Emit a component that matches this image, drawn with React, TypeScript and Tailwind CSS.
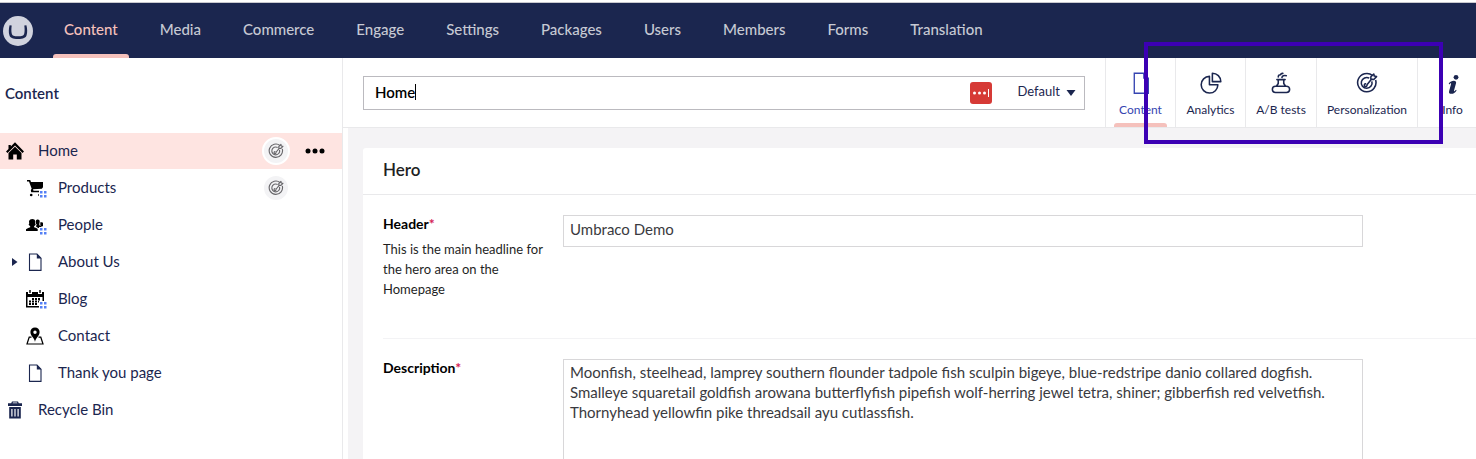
import { useState, type ReactNode } from "react";

const sections = ["Content", "Media", "Commerce", "Engage", "Settings", "Packages", "Users", "Members", "Forms", "Translation"];

function Logo() {
  return (
    <svg viewBox="0 0 30 30" className="size-[30px]" aria-hidden="true">
      <circle cx="15" cy="15" r="15" fill="#d1d3de" />
      <path d="M6.600 9.200c-.9 3.300-1.100 7.400-.2 10 .9 2.700 3.100 3.700 8.600 3.700s7.700-1 8.600-3.700c.9-2.600.7-6.700-.2-10l-2.100.3c.4 2.700.5 6.200-.1 8.200-.6 2-2.200 2.500-6.200 2.500s-5.600-.5-6.200-2.500c-.6-2-.5-5.500-.1-8.200z" fill="#1b264f" />
    </svg>
  );
}

function HomeIcon() {
  return (
    <svg viewBox="0 0 18 18" className="size-[18px]" fill="#000" aria-hidden="true">
      <path d="M9 .3l9 9.200-1.500 1.500L9 3.600l-7.500 7.400L0 9.500l2.500-2.600V3h2.300v1.600z" />
      <path d="M9 4.700l6.500 6.400V17.500h-4.700v-5H7.200v5H2.500v-6.400z" />
    </svg>
  );
}

function CartIcon() {
  return (
    <svg viewBox="0 0 18 18" className="size-[18px]" fill="#000" aria-hidden="true">
      <path d="M1 1h3.200l.8 2h12v5.200l-1.200 1.500-8.800.6.500 1.500h7V13.200H5.200L4.800 11l.9-1.200L3 2.600H1z" />
      <circle cx="5.200" cy="16" r="1.300" />
      <circle cx="13.500" cy="16" r="1.300" />
    </svg>
  );
}

function PeopleIcon() {
  return (
    <svg viewBox="0 0 18 18" className="size-[18px]" fill="#000" aria-hidden="true">
      <path d="M0 15v-1.800l2.200-1.200 2-.8v-1L2.600 8.800l.6-1.300-.2-2.200C3.500 3.700 4.800 3 6.300 3s2.900.8 3.100 2.500l-.2 2 .5 1.300-1.600 1.400v1l2.200.8 1.400 1.100V15z" />
      <path d="M10 4.600c.4-.8 1-1.100 1.800-1.100 1.200 0 1.900.8 1.900 2.200l-.4 2v1.500l2.200 1V12h-3.300l-2-1.200V9.500l.7-.8-.9-1z" />
      <path d="M14.300 6.200h1.500l1.200.6v3.400h-1.600l-1.100-.8z" />
    </svg>
  );
}

function CalendarIcon() {
  return (
    <svg viewBox="0 0 18 18" className="size-[18px]" fill="#000" aria-hidden="true">
      <path fillRule="evenodd" d="M0 2h2v2h4V2h6v2h4V2h2v15.500H0zM1.500 7v9h15V7z" />
      <path d="M3.300 0h1.400v3H3.300zM13.300 0h1.400v3h-1.400z" />
      <path d="M6 8h2v2H6zM9 8h2v2H9zM12 8h2v2h-2zM3 10.500h2v2H3zM6 10.500h2v2H6zM9 10.500h2v2H9zM12 10.500h2v2h-2zM3 13h2v2H3zM6 13h2v2H6zM9 13h2v2H9z" />
    </svg>
  );
}

function MapIcon() {
  return (
    <svg viewBox="0 0 18 18" className="size-[18px]" fill="#000" aria-hidden="true">
      <path fillRule="evenodd" d="M9 .5c2.700 0 4.600 1.900 4.600 4.500 0 2.400-1.500 4.200-2.700 5.800C9.900 12.200 9.300 13.300 9 15c-.3-1.700-.9-2.800-1.900-4.200C5.900 9.200 4.400 7.400 4.400 5 4.400 2.400 6.300.5 9 .5zm0 3a1.700 1.700 0 100 3.400 1.700 1.700 0 000-3.400z" />
      <path d="M5.500 10.200H3.200L1 17h16l-2.200-6.800h-2.300" fill="none" stroke="#000" strokeWidth="1.200" />
    </svg>
  );
}

function PageIcon({ color = "#1b264f", className = "size-[18px]" }: { color?: string; className?: string }) {
  return (
    <svg viewBox="0 0 18 18" className={className} aria-hidden="true">
      <path d="M3.500 1h7.500l4 4.200v12.200H3.500z" fill="none" stroke={color} strokeWidth="1.100" />
      <path d="M10.800.8l4.600 4.800h-4.600z" fill={color} />
    </svg>
  );
}

function TrashIcon() {
  return (
    <svg viewBox="0 0 18 18" className="size-[18px]" fill="#1b264f" aria-hidden="true">
      <path d="M6 .5h6l.8 1.800H16V5H2V2.300h3.200zM7 1.500l-.4.8h4.800l-.4-.8z" fillRule="evenodd" />
      <path fillRule="evenodd" d="M3.200 6h11.600v11.500H3.200zM5.300 8v7.500h1.200V8zm3.100 0v7.500h1.200V8zm3.100 0v7.500h1.200V8z" />
    </svg>
  );
}

function TargetIcon({ className }: { className: string }) {
  return (
    <svg viewBox="0 0 24 24" className={className} fill="none" stroke="currentColor" strokeWidth="1.700" strokeLinejoin="round" aria-hidden="true">
      <path d="M18.200 3.900A10 10 0 1 0 21.400 8.800" />
      <path d="M14.500 6.700A5.900 5.900 0 1 0 17.300 10.200" />
      <path d="M11 12.900a1.500 1.500 0 1 0 1 1L16.800 8M16.200 7.800V5.200l3.200-3 .5 2.200 2.500.6-3 3.100z" />
    </svg>
  );
}

function PieIcon() {
  return (
    <svg viewBox="0 0 24 24" className="size-[22px]" fill="none" stroke="#1b264f" strokeWidth="1.700" strokeLinejoin="round" aria-hidden="true">
      <path d="M10.300 4.800a9.100 9.100 0 1 0 9.200 9.200h-9.200z" />
      <path d="M13.500 1.300v9.200h9.200a9.200 9.200 0 0 0-9.200-9.200z" />
    </svg>
  );
}

function FlaskIcon() {
  return (
    <svg viewBox="0 0 24 24" className="size-[22px]" fill="none" stroke="#1b264f" strokeWidth="1.700" strokeLinecap="round" strokeLinejoin="round" aria-hidden="true">
      <path d="M7.500 8.300h9M9 8.500v4L7 15.500M15 8.500v4l2 3M6 15.500h12a3.400 3.400 0 0 1 0 6.800h-12a3.400 3.400 0 0 1 0-6.800z" />
      <path d="M9 5.500c0-2 1.200-2.700 2.500-2.500.3-1.200 1.300-1.600 2.500-1.500M13 6c.3-1.700 2-2.500 4.800-2" />
    </svg>
  );
}

function InfoIcon() {
  return (
    <svg viewBox="0 0 24 24" className="size-[22px]" fill="#1b264f" aria-hidden="true">
      <circle cx="15.300" cy="5.800" r="2.600" />
      <path d="M7.300 12.500c1.600-2 3.500-3 5.600-3 1.900 0 2.900 1 2.400 2.900l-2.200 7.800c-.2.800.3.900.8.500l1.400-1.300.6.700c-1.600 2.400-3.300 3.700-5.600 3.700-2.200 0-3.100-1.200-2.500-3.200l2.100-7.400c.3-1-.3-1.200-1-.6L8 13.500z" />
    </svg>
  );
}

type Node = { name: string; icon: ReactNode; root?: boolean; collection?: boolean; expandable?: boolean; targeted?: boolean; active?: boolean };

const nodes: Node[] = [
  { name: "Home", icon: <HomeIcon />, root: true, targeted: true, active: true },
  { name: "Products", icon: <CartIcon />, collection: true, targeted: true },
  { name: "People", icon: <PeopleIcon />, collection: true },
  { name: "About Us", icon: <PageIcon />, expandable: true },
  { name: "Blog", icon: <CalendarIcon />, collection: true },
  { name: "Contact", icon: <MapIcon /> },
  { name: "Thank you page", icon: <PageIcon /> },
  { name: "Recycle Bin", icon: <TrashIcon />, root: true },
];

function CollectionBadge() {
  return (
    <svg viewBox="0 0 8 8" className="absolute -right-[3px] -bottom-px size-2" aria-hidden="true">
      <path d="M0 0h8v8H0z" fill="#fff" />
      <path d="M1 1h2.500v2.500H1zM5 1h2.500v2.500H5zM1 5h2.500v2.500H1zM5 5h2.500v2.500H5z" fill="#5580f5" />
    </svg>
  );
}

function TreeRow({ node }: { node: Node }) {
  return (
    <li className={`flex h-9 items-center pr-[17px] ${node.active ? "bg-[#fee4e1]" : ""} ${node.root ? "pl-[6px]" : "pl-[10px]"}`}>
      {!node.root && (
        <span className="flex w-4 shrink-0 items-center">
          {node.expandable && (
            <button aria-label={`Expand ${node.name}`} className="flex h-5 w-3 items-center">
              <svg viewBox="0 0 8 8" className="ml-[2px] size-2" aria-hidden="true">
                <path d="M0 0l5.500 4L0 8z" fill="#1b264f" />
              </svg>
            </button>
          )}
        </span>
      )}
      <span className="relative shrink-0">
        {node.icon}
        {node.collection && <CollectionBadge />}
      </span>
      <a href="#" className="ml-[14px] flex-1 pb-[2px] leading-5">{node.name}</a>
      {node.targeted && (
        <span className={`flex size-7 items-center justify-center rounded-full border-2 border-white bg-[#f3f3f5] text-[#68676b] ${node.active ? "mr-[15px]" : "mr-[35px]"}`}>
          <TargetIcon className="size-4" />
        </span>
      )}
      {node.active && (
        <button aria-label="Actions" className="flex h-6 w-5 items-center">
          <svg viewBox="0 0 20 6" className="h-[6px] w-5" aria-hidden="true">
            <circle cx="3" cy="3" r="2.500" />
            <circle cx="10" cy="3" r="2.500" />
            <circle cx="17" cy="3" r="2.500" />
          </svg>
        </button>
      )}
    </li>
  );
}

const apps = [
  { name: "Content", icon: <PageIcon color="#3544b1" className="size-[22px]" />, width: "w-[70px]", active: true },
  { name: "Analytics", icon: <PieIcon />, width: "w-[70px]" },
  { name: "A/B tests", icon: <FlaskIcon />, width: "w-[71px]" },
  { name: "Personalization", icon: <TargetIcon className="size-[22px]" />, width: "w-[101px]" },
  { name: "Info", icon: <InfoIcon />, width: "w-[70px]" },
];

function Property({ id, label, help, children }: { id: string; label: string; help?: string; children: ReactNode }) {
  return (
    <div className="ml-5 flex min-h-[144px] gap-5 border-b border-[#f3f3f5] py-5">
      <div className="-mt-px w-40 shrink-0 text-[13px] leading-5 text-[#1f1f1f]">
        <label htmlFor={id} className="block text-sm leading-5 font-bold text-black">
          {label}<span className="text-[#d42054]">*</span>
        </label>
        {help && <p className="mt-[5px]">{help}</p>}
      </div>
      <div className="min-w-0 flex-1 pr-5">{children}</div>
    </div>
  );
}

export default function App() {
  const [name, setName] = useState("Home");
  const [header, setHeader] = useState("Umbraco Demo");
  const [description, setDescription] = useState(
    "Moonfish, steelhead, lamprey southern flounder tadpole fish sculpin bigeye, blue-redstripe danio collared dogfish. Smalleye squaretail goldfish arowana butterflyfish pipefish wolf-herring jewel tetra, shiner; gibberfish red velvetfish. Thornyhead yellowfin pike threadsail ayu cutlassfish."
  );
  return (
    <div className="relative flex h-screen flex-col overflow-hidden bg-white font-['Lato','Liberation_Sans',sans-serif] text-[15px] text-[#1b264f]">
      <header className="mt-[2px] flex h-14 shrink-0 items-center border-t border-[#c9c9cf] bg-[#1b264f] pl-[3px]">
        <a href="#" aria-label="Umbraco"><Logo /></a>
        <nav className="ml-[10px] flex h-full">
          {sections.map((s, i) => (
            <a key={s} href="#" className={`flex h-full flex-col items-center justify-between px-[10px] font-medium ${i === 0 ? "text-[#f5c1bc]" : "text-[#c6c9d3]"}`}>
              <span className="px-[11px] pt-[15px] leading-[22px]">{s}</span>
              {i === 0 && <span className="h-1 w-full rounded-t-[3px] bg-[#f5c1bc]" />}
            </a>
          ))}
        </nav>
      </header>

      <div className="flex min-h-0 flex-1">
        <aside className="w-[343px] shrink-0 border-r border-[#e9e9eb]">
          <h2 className="px-[5px] pt-[25px] pb-[30px] leading-5 font-semibold">Content</h2>
          <ul className="flex flex-col gap-px">
            {nodes.map((n) => <TreeRow key={n.name} node={n} />)}
          </ul>
        </aside>

        <main className="flex min-w-0 flex-1 flex-col">
          <div className="flex h-[70px] shrink-0 border-b border-[#e9e9eb] pl-5">
            <div className="mt-[18px] mr-5 flex h-[34px] min-w-0 flex-1 items-center border border-[#bbbabf] pr-2 pl-[11px]">
              <label className="flex min-w-0 flex-1 cursor-text pb-[2px]">
                <input aria-label="Name" autoFocus value={name} onChange={(e) => setName(e.target.value)} className="h-4 max-w-full min-w-0 border-r border-black leading-4 font-semibold text-black caret-transparent outline-none field-sizing-content" />
              </label>
              <button aria-label="Fill in" className="mr-[25px]">
                <svg viewBox="0 0 22 22" className="size-[22px]" aria-hidden="true">
                  <rect width="22" height="22" rx="3" fill="#d63a36" />
                  <circle cx="4.500" cy="11" r="1.500" fill="#fff" />
                  <circle cx="9.500" cy="11" r="1.500" fill="#fff" />
                  <circle cx="14.500" cy="11" r="1.500" fill="#fff" />
                  <path d="M18 7h1v8h-1z" fill="#fff" />
                </svg>
              </button>
              <button className="flex items-center gap-[6px] pb-[2px] text-[13px]">
                Default
                <svg viewBox="0 0 10 8" className="mt-[2px] h-2 w-[10px]" aria-hidden="true">
                  <path d="M.5 1h9L5 7z" fill="#1b264f" />
                </svg>
              </button>
            </div>
            <div className="flex w-[371px] shrink-0 overflow-hidden">
              {apps.map((a) => (
                <button key={a.name} className={`flex shrink-0 flex-col items-center border-l border-[#e9e9eb] pt-[13px] text-xs ${a.width} ${a.active ? "text-[#3544b1]" : ""}`}>
                  <span className="flex h-6 items-center">{a.icon}</span>
                  <span className="mt-[5px] leading-5">{a.name}</span>
                  {a.active && <span className="mt-[3px] h-1 w-[53px] rounded-t-[3px] bg-[#f5c1bc]" />}
                </button>
              ))}
            </div>
          </div>

          <div className="ml-[5px] min-h-0 flex-1 overflow-hidden bg-[#f4f3f5] pt-5 pl-[15px]">
            <section className="rounded-tl-[3px] bg-white">
              <h3 className="border-b border-[#e9e9eb] px-5 pt-[10px] pb-3 text-[17px] leading-6 font-semibold text-[#1f1f24]">Hero</h3>
              <Property id="header" label="Header" help="This is the main headline for the hero area on the Homepage">
                <input id="header" value={header} onChange={(e) => setHeader(e.target.value)} className="block h-8 w-full max-w-[800px] border border-[#d8d7d9] px-[6px] pb-1 text-[#3a3a40] outline-none" />
              </Property>
              <Property id="description" label="Description">
                <textarea id="description" rows={10} value={description} onChange={(e) => setDescription(e.target.value)} className="block w-full max-w-[800px] resize-none overflow-hidden border border-[#d8d7d9] px-[6px] py-[2px] leading-5 text-[#3a3a40] outline-none" />
              </Property>
            </section>
          </div>
        </main>
      </div>

      <div className="pointer-events-none absolute top-[42px] right-[33px] h-[102px] w-[299px] border-4 border-[#3c00b4]" />
    </div>
  );
}
